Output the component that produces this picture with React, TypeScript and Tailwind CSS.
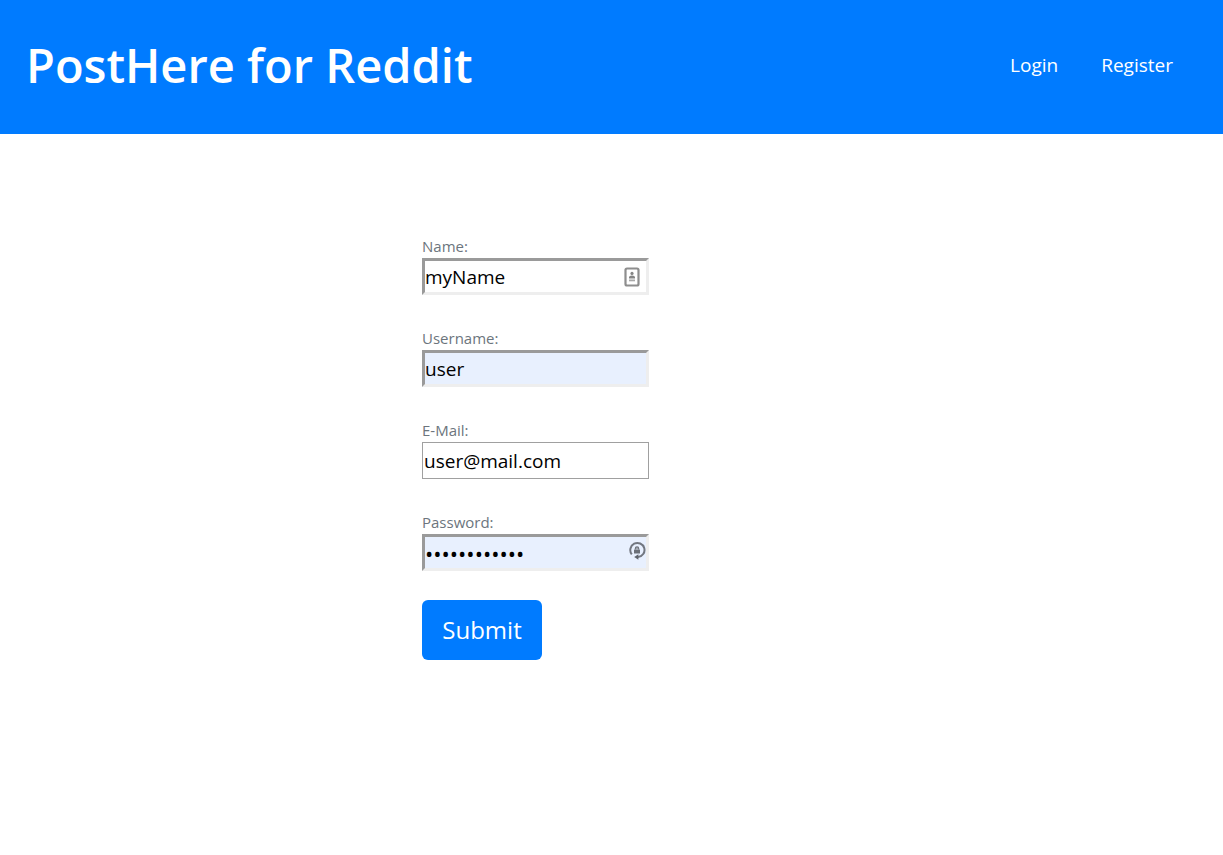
import { useState, type ReactNode } from "react";

function ContactIcon() {
  return (
    <svg viewBox="0 0 16 20" className="h-5 w-4" aria-hidden="true">
      <rect x="1.5" y="1.5" width="13" height="17" rx="1.5" fill="#fff" stroke="#8e8e8e" strokeWidth="2.2" />
      <circle cx="8" cy="6.4" r="1.6" fill="#858585" />
      <path d="M5 11.4V9.8Q8 7 11 9.8V11.4Z" fill="#858585" />
      <path d="M5 13.4H11" stroke="#a8a8a8" strokeWidth="1.8" />
    </svg>
  );
}

function PasswordIcon() {
  return (
    <svg viewBox="0 0 18 20" className="h-5 w-[18px]" aria-hidden="true">
      <path d="M3.8 13.4A7.1 7.1 0 1 1 10 16.1" fill="none" stroke="#727780" strokeWidth="2" />
      <path d="M10.4 13.2V18.8L6.2 16Z" fill="#5f646c" />
      <rect x="6" y="8.4" width="6" height="4.2" rx="0.5" fill="#6b7078" />
      <path d="M7.3 8.6V7.6a1.7 1.7 0 0 1 3.4 0V8.6" fill="#a3a8b2" stroke="#6b7078" strokeWidth="1.1" />
    </svg>
  );
}

type FieldProps = {
  id: string;
  label: string;
  type?: string;
  initial: string;
  look: string;
  icon?: ReactNode;
  iconClass?: string;
};

const inset = "border-[3px] border-t-[#9a9a9a] border-l-[#9a9a9a] border-b-[#eeeeee] border-r-[#eeeeee]";

function Field({ id, label, type = "text", initial, look, icon, iconClass = "" }: FieldProps) {
  const [value, setValue] = useState(initial);
  return (
    <div className="flex flex-col items-start">
      <label htmlFor={id} className="pb-0.5 text-[15px] leading-5 text-[#6c757d]">
        {label}
      </label>
      <div className="relative w-[227px]">
        <input
          id={id}
          type={type}
          value={value}
          onChange={(e) => setValue(e.target.value)}
          className={`block h-[37px] w-full text-black outline-none ${look}`}
        />
        {icon && <span className={`pointer-events-none absolute ${iconClass}`}>{icon}</span>}
      </div>
    </div>
  );
}

export default function App() {
  return (
    <div className="min-h-screen bg-white font-['Open_Sans','Noto_Sans',sans-serif]">
      <header className="flex h-[134px] items-center justify-between bg-[#007bff] pr-[50px] pb-1 pl-[26px] text-white">
        <h1 className="text-[47px] leading-[60px] font-semibold">PostHere for Reddit</h1>
        <nav className="flex gap-[43px] text-[19px] leading-7">
          <a href="#login">Login</a>
          <a href="#register">Register</a>
        </nav>
      </header>
      <main className="px-4 pt-[102px]">
        <form
          className="mx-auto flex max-w-[379px] flex-col items-start"
          onSubmit={(e) => e.preventDefault()}
        >
          <div className="flex flex-col gap-[33px]">
            <Field id="name" label="Name:" initial="myName" look={`text-[19px] ${inset}`} icon={<ContactIcon />} iconClass="top-[9px] right-[9px]" />
            <Field id="username" label="Username:" initial="user" look={`bg-[#e8f0fe] text-[19px] ${inset}`} />
            <Field id="email" label="E-Mail:" type="email" initial="user@mail.com" look="border border-[#a0a0a0] px-px text-[19px]" />
            <Field
              id="password"
              label="Password:"
              type="password"
              initial="abcdefghijkl"
              look={`bg-[#e8f0fe] text-[22px] ${inset}`}
              icon={<PasswordIcon />}
              iconClass="top-[7px] right-[3px]"
            />
          </div>
          <button type="submit" className="mt-[29px] h-[60px] w-[120px] rounded-md bg-[#007bff] text-2xl text-white">
            Submit
          </button>
        </form>
      </main>
    </div>
  );
}
